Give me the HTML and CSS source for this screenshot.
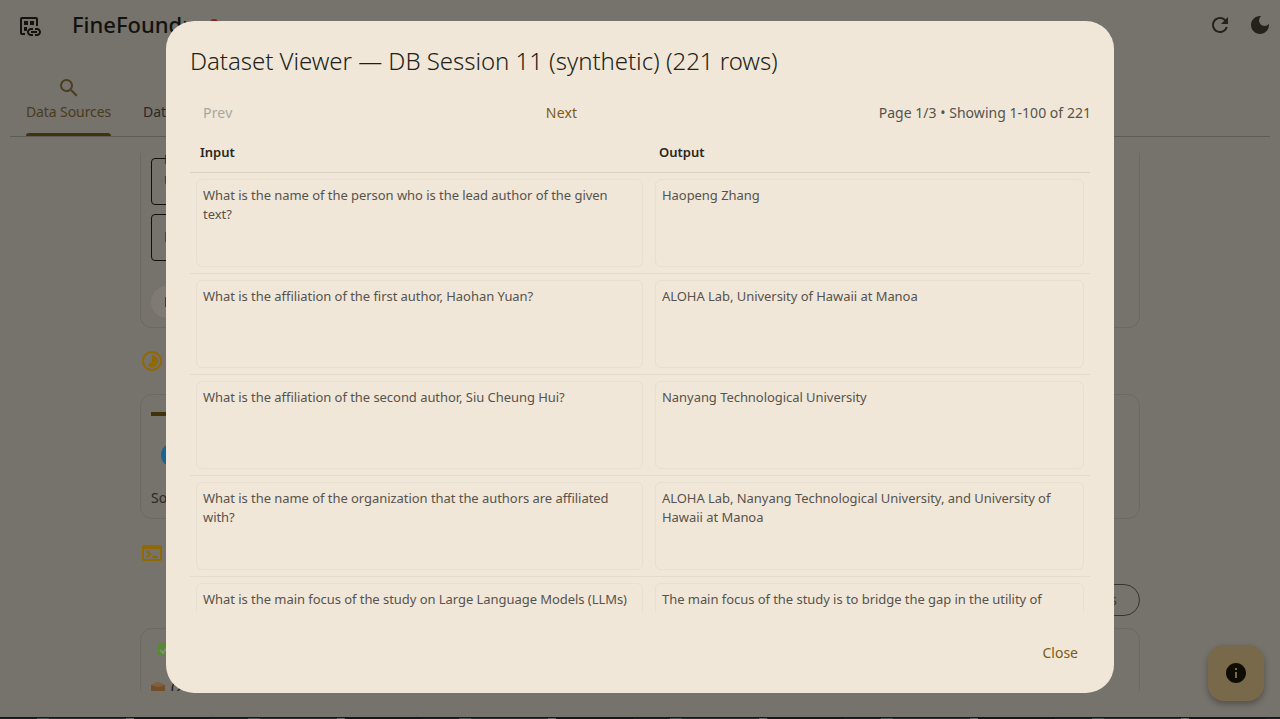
FILE: index.html
```html
<!DOCTYPE html>
<html lang="en">
<head>
    <meta charset="UTF-8">
    <meta name="viewport" content="width=device-width, initial-scale=1.0">
    <title>FineFoundry</title>
    <link rel="stylesheet" href="styles.css">
</head>
<body>
    <div class="app">
        <header class="topbar">
            <svg class="icon logo-icon" viewBox="0 0 24 24">
                <path class="logo-outline" d="M8 20H5a1 1 0 0 1-1-1V5a1 1 0 0 1 1-1h14a1 1 0 0 1 1 1v7"/>
                <path d="M7 7h4v4H7zM13 7h4v4h-4zM7 13h3v4H7z"/>
                <path d="M12 18c0 1.100.9 2 2 2h2v2h-2c-2.210 0-4-1.790-4-4s1.790-4 4-4h2v2h-2c-1.100 0-2 .9-2 2zm8-4h-2v2h2c1.100 0 2 .9 2 2s-.9 2-2 2h-2v2h2c2.210 0 4-1.790 4-4s-1.790-4-4-4zm-6 3v2h6v-2z"/>
            </svg>
            <span class="app-title">FineFoundry</span>
            <span class="title-badge"></span>
            <div class="topbar-actions">
                <svg class="icon" viewBox="0 0 24 24"><path d="M17.650 6.350A7.958 7.958 0 0 0 12 4c-4.420 0-7.990 3.580-7.990 8s3.570 8 7.990 8c3.730 0 6.840-2.550 7.730-6h-2.080A5.990 5.990 0 0 1 12 18c-3.310 0-6-2.690-6-6s2.690-6 6-6c1.660 0 3.140.69 4.220 1.780L13 11h7V4l-2.350 2.350z"/></svg>
                <svg class="icon" viewBox="0 0 24 24"><path d="M12 3c-4.970 0-9 4.030-9 9s4.030 9 9 9 9-4.030 9-9c0-.46-.04-.92-.1-1.360-.98 1.370-2.580 2.260-4.400 2.260-2.980 0-5.400-2.420-5.400-5.400 0-1.810.89-3.420 2.260-4.400-.44-.06-.9-.1-1.360-.1z"/></svg>
            </div>
        </header>

        <nav class="tabs">
            <div class="tab active">
                <svg class="icon" viewBox="0 0 24 24"><path d="M15.500 14h-.79l-.28-.27A6.471 6.471 0 0 0 16 9.500 6.500 6.500 0 1 0 9.500 16c1.610 0 3.090-.59 4.230-1.570l.27.28v.79l5 4.990L20.490 19l-4.990-5zm-6 0C7.010 14 5 11.990 5 9.500S7.010 5 9.500 5 14 7.010 14 9.500 11.990 14 9.500 14z"/></svg>
                <span>Data Sources</span>
            </div>
            <div class="tab">
                <span class="tab-icon-space"></span>
                <span>Dataset Builder</span>
            </div>
        </nav>

        <main class="content">
            <section class="card source-card">
                <div class="field"><span class="field-label">Name</span>Upload</div>
                <div class="field">Dataset</div>
                <div class="chip">Parse</div>
            </section>

            <div class="section-head">
                <svg class="icon amber" viewBox="0 0 24 24"><path d="M16.240 7.760A5.974 5.974 0 0 0 12 6v6l-4.240 4.240c2.340 2.340 6.140 2.340 8.490 0 2.340-2.340 2.340-6.140-.01-8.480zM12 2C6.480 2 2 6.480 2 12s4.480 10 10 10 10-4.480 10-10S17.520 2 12 2zm0 18c-4.420 0-8-3.580-8-8s3.580-8 8-8 8 3.580 8 8-3.580 8-8 8z"/></svg>
            </div>

            <section class="card progress-card">
                <div class="progress-bar"></div>
                <div class="spinner-dot"></div>
                <div class="progress-text">Source ready</div>
            </section>

            <div class="section-head terminal-head">
                <svg class="icon amber" viewBox="0 0 24 24"><path d="M20 4H4c-1.100 0-2 .9-2 2v12c0 1.100.9 2 2 2h16c1.100 0 2-.9 2-2V6c0-1.100-.9-2-2-2zm0 14H4V8h16v10zm-2-1h-6v-2h6v2zM7.500 17l-1.410-1.410L8.670 13l-2.590-2.590L7.500 9l4 4-4 4z"/></svg>
            </div>
            <div class="log-actions"><span class="pill">Save logs</span></div>

            <section class="card log-card">
                <svg class="check-mark" viewBox="0 0 12 13"><rect width="12" height="13" rx="1"/><path d="M2 7l3 3 5-7"/></svg>
                <div class="log-line">
                    <svg class="box-mark" viewBox="0 0 14 12"><path d="M0 3l7-3 7 3v9H0z"/><path class="box-top" d="M0 3l7-3 7 3-7 2z"/></svg>
                    <span>(221 rows)</span>
                </div>
            </section>
        </main>

        <button class="info-fab">
            <svg viewBox="0 0 24 24"><path d="M12 2C6.480 2 2 6.480 2 12s4.480 10 10 10 10-4.480 10-10S17.520 2 12 2zm1 15h-2v-6h2v6zm0-8h-2V7h2v2z"/></svg>
        </button>

        <div class="scrim">
            <div class="dialog">
                <h2>Dataset Viewer — DB Session 11 (synthetic) (221 rows)</h2>

                <div class="pager">
                    <button class="text-btn" disabled>Prev</button>
                    <button class="text-btn">Next</button>
                    <span class="page-info">Page 1/3 • Showing 1-100 of 221</span>
                </div>

                <div class="table-head">
                    <div>Input</div>
                    <div>Output</div>
                </div>

                <div class="table-rows">
                    <div class="row">
                        <div class="cell">What is the name of the person who is the lead author of the given text?</div>
                        <div class="cell">Haopeng Zhang</div>
                    </div>
                    <div class="row">
                        <div class="cell">What is the affiliation of the first author, Haohan Yuan?</div>
                        <div class="cell">ALOHA Lab, University of Hawaii at Manoa</div>
                    </div>
                    <div class="row">
                        <div class="cell">What is the affiliation of the second author, Siu Cheung Hui?</div>
                        <div class="cell">Nanyang Technological University</div>
                    </div>
                    <div class="row">
                        <div class="cell">What is the name of the organization that the authors are affiliated with?</div>
                        <div class="cell">ALOHA Lab, Nanyang Technological University, and University of Hawaii at Manoa</div>
                    </div>
                    <div class="row">
                        <div class="cell">What is the main focus of the study on Large Language Models (LLMs)</div>
                        <div class="cell">The main focus of the study is to bridge the gap in the utility of</div>
                    </div>
                </div>

                <div class="dialog-actions">
                    <button class="text-btn">Close</button>
                </div>
            </div>
        </div>
    </div>
    <div class="desktop-strip"></div>
</body>
</html>
```

FILE: styles.css
```css
* {
    box-sizing: border-box;
}

body {
    margin: 0;
    font-family: "Noto Sans", "Open Sans", sans-serif;
    background-color: #14181a;
    overflow: hidden;
}

button {
    font-family: inherit;
}

.app {
    position: relative;
    height: 717px;
    background-color: #c5beb4;
    color: #49463f;
    overflow: hidden;
}

.icon {
    width: 24px;
    height: 24px;
    fill: #3e3a2e;
    flex: none;
}

/* top bar */
.topbar {
    height: 50px;
    display: flex;
    align-items: center;
    padding: 0 8px 0 17px;
}

.logo-icon {
    fill: #211f18;
    margin-top: 1px;
}

.logo-outline {
    fill: none;
    stroke: #211f18;
    stroke-width: 2;
}

.app-title {
    margin: -2px 0 0 31px;
    font-size: 22px;
    font-weight: 500;
    color: #211f18;
}

.title-badge {
    width: 8px;
    height: 8px;
    margin: -4px 0 0 7px;
    border-radius: 50%;
    background-color: #e53935;
}

.topbar-actions {
    margin-left: auto;
    display: flex;
    gap: 16px;
}

/* tabs */
.tabs {
    height: 87px;
    margin: 0 10px;
    padding-left: 16px;
    display: flex;
    gap: 32px;
    border-bottom: 1px solid #9e9890;
}

.tab {
    display: flex;
    flex-direction: column;
    align-items: center;
    padding-top: 26px;
    font-size: 14px;
    letter-spacing: -0.1px;
    line-height: 24px;
    white-space: nowrap;
}

.tab.active {
    color: #7b6435;
}

.tab.active::after {
    content: "";
    width: 100%;
    height: 3px;
    margin-top: auto;
    border-radius: 3px 3px 0 0;
    background-color: #6f5414;
}

.tab.active .icon {
    fill: #7b6435;
}

.tab-icon-space {
    height: 24px;
}

/* page behind the dialog */
.content {
    height: 554px;
    margin: 0 10px;
    padding: 16px 130px 0;
    overflow: hidden;
}

.card {
    border: 1px solid #b4afa6;
    border-radius: 12px;
    padding-left: 10px;
}

.source-card {
    height: 175px;
    padding-top: 5px;
    border-top: none;
    border-radius: 0 0 12px 12px;
}

.field {
    position: relative;
    width: 800px;
    height: 47px;
    margin-bottom: 9px;
    padding: 12px 12px 0;
    border: 1px solid #1c1c1c;
    border-radius: 4px;
    font-size: 14px;
}

.field-label {
    position: absolute;
    top: -8px;
    left: 12px;
    font-size: 12px;
}

.chip {
    width: 140px;
    height: 32px;
    margin-top: 25px;
    padding-left: 13px;
    border-radius: 16px;
    background-color: #d4cdc2;
    font-size: 14px;
    line-height: 32px;
    color: #2a2517;
}

.section-head {
    height: 66px;
    display: flex;
    align-items: center;
}

.terminal-head {
    height: 65px;
    padding-top: 2px;
}

.amber {
    fill: #f0b000;
}

.progress-card {
    height: 125px;
    padding-top: 17px;
}

.progress-bar {
    width: 15px;
    height: 4px;
    background-color: #6f5414;
}

.spinner-dot {
    width: 24px;
    height: 24px;
    margin: 27px 0 0 10px;
    border-radius: 50%;
    background-color: #2aa5f5;
}

.progress-text {
    margin-top: 21px;
    font-size: 14px;
    line-height: 20px;
}

.log-actions {
    display: flex;
    justify-content: flex-end;
    margin-bottom: 12px;
}

.pill {
    height: 32px;
    padding: 0 22px;
    border: 1px solid #5c564b;
    border-radius: 16px;
    font-size: 14px;
    line-height: 30px;
    color: #7b6435;
}

.log-card {
    height: 120px;
    padding-top: 14px;
}

.check-mark {
    display: block;
    width: 12px;
    height: 13px;
    margin-left: 7px;
    fill: #96e55a;
}

.check-mark path {
    fill: none;
    stroke: #dfe6dc;
    stroke-width: 2;
}

.log-line {
    display: flex;
    align-items: center;
    gap: 6px;
    margin-top: 22px;
    font-size: 14px;
    line-height: 20px;
    color: #1f1c16;
}

.box-mark {
    width: 14px;
    height: 12px;
    fill: #c08245;
}

.box-top {
    fill: #d8a06a;
}

.info-fab {
    position: absolute;
    left: 1208px;
    top: 645px;
    width: 56px;
    height: 56px;
    padding: 0;
    display: flex;
    align-items: center;
    justify-content: center;
    border: none;
    border-radius: 16px;
    background-color: #c6af7b;
    box-shadow: 0 3px 6px rgba(0, 0, 0, 0.3);
}

.info-fab svg {
    width: 24px;
    height: 24px;
    fill: #191408;
}

/* dialog */
.scrim {
    position: absolute;
    inset: 0;
    padding-bottom: 3px;
    display: flex;
    align-items: center;
    justify-content: center;
    background-color: rgba(0, 0, 0, 0.4);
}

.dialog {
    width: 948px;
    height: 672px;
    padding: 24px 24px 21px;
    display: flex;
    flex-direction: column;
    border-radius: 28px;
    background-color: #f0e7d9;
    color: #57534c;
}

.dialog h2 {
    margin: 0 0 15px;
    font-size: 24px;
    font-weight: 300;
    letter-spacing: -0.04px;
    line-height: 32px;
    color: #231f18;
}

.pager {
    display: flex;
    align-items: center;
    justify-content: space-between;
    height: 40px;
    margin-bottom: 1px;
    padding-left: 1px;
}

.text-btn {
    height: 40px;
    padding: 0 12px;
    border: none;
    background: none;
    font-size: 14px;
    color: #7a5c14;
    cursor: pointer;
}

.pager .text-btn {
    letter-spacing: 0.2px;
}

.text-btn:disabled {
    color: #aaa69d;
}

.page-info {
    margin-right: -1px;
    font-size: 14px;
    letter-spacing: 0.03px;
}

.table-head {
    display: grid;
    grid-template-columns: 459px 441px;
    height: 40px;
    padding: 10px 0 0 10px;
    border-bottom: 1px solid #d9d1c4;
    font-size: 13px;
    font-weight: 600;
    line-height: 19px;
    color: #2a2620;
}

.table-head > div + div {
    margin-left: -10px;
    padding-left: 10px;
}

.table-rows {
    height: 439px;
    flex: none;
    overflow: hidden;
}

.row {
    display: grid;
    grid-template-columns: 459px 441px;
    border-bottom: 1px solid #e3dbce;
}

.cell {
    height: 88px;
    margin: 6px;
    padding: 6px;
    border: 1px solid #e6dfd2;
    border-radius: 6px;
    font-size: 13px;
    letter-spacing: -0.05px;
    line-height: 19px;
}

.dialog-actions {
    margin-top: 20px;
    display: flex;
    justify-content: flex-end;
}

.desktop-strip {
    height: 2px;
    background: repeating-linear-gradient(90deg, #1b2225 0 37px, #4a5357 37px 49px, #2a3236 49px 126px, #656d70 126px 134px, #14181a 134px 211px);
    border-top: 1px solid #14181a;
}
```
